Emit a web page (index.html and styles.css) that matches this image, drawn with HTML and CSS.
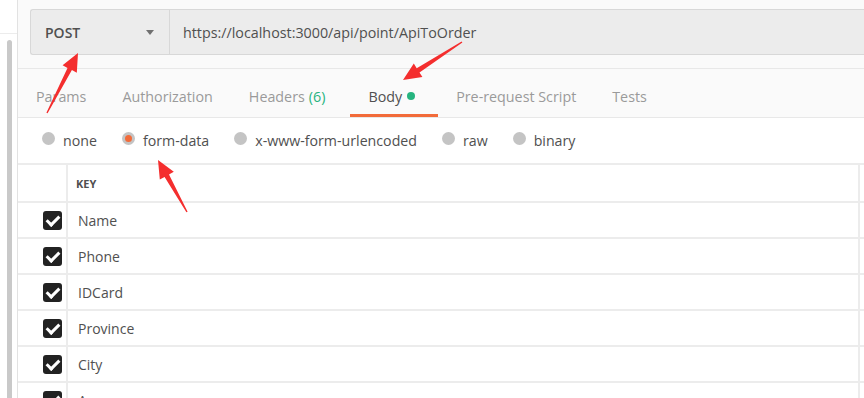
FILE: index.html
```html
<!DOCTYPE html>
<html lang="en">
<head>
    <meta charset="UTF-8">
    <meta name="viewport" content="width=device-width, initial-scale=1.0">
    <title>Request Body</title>
    <link rel="stylesheet" href="styles.css">
</head>
<body>
    <div class="page">
        <div class="sidebar">
            <div class="sidebar-top"></div>
            <div class="scroll-track"><div class="scroll-thumb"></div></div>
        </div>

        <div class="main">
            <div class="request-bar">
                <div class="method">POST <span class="caret"></span></div>
                <div class="url">https://localhost:3000/api/point/ApiToOrder</div>
            </div>

            <div class="tabs">
                <div class="tab">Params</div>
                <div class="tab">Authorization</div>
                <div class="tab">Headers <span class="count">(6)</span></div>
                <div class="tab active">Body <span class="dot"></span></div>
                <div class="tab">Pre-request Script</div>
                <div class="tab">Tests</div>
            </div>

            <div class="body-types">
                <label class="radio"><span class="circle"></span>none</label>
                <label class="radio checked"><span class="circle"></span>form-data</label>
                <label class="radio"><span class="circle"></span>x-www-form-urlencoded</label>
                <label class="radio"><span class="circle"></span>raw</label>
                <label class="radio"><span class="circle"></span>binary</label>
            </div>

            <div class="kv-table">
                <div class="kv-row head">
                    <div class="check-cell"></div>
                    <div class="key-cell">KEY</div>
                    <div class="end-cell"></div>
                </div>
                <div class="kv-row">
                    <div class="check-cell"><span class="checkbox"></span></div>
                    <div class="key-cell">Name</div>
                    <div class="end-cell"></div>
                </div>
                <div class="kv-row">
                    <div class="check-cell"><span class="checkbox"></span></div>
                    <div class="key-cell">Phone</div>
                    <div class="end-cell"></div>
                </div>
                <div class="kv-row">
                    <div class="check-cell"><span class="checkbox"></span></div>
                    <div class="key-cell">IDCard</div>
                    <div class="end-cell"></div>
                </div>
                <div class="kv-row">
                    <div class="check-cell"><span class="checkbox"></span></div>
                    <div class="key-cell">Province</div>
                    <div class="end-cell"></div>
                </div>
                <div class="kv-row">
                    <div class="check-cell"><span class="checkbox"></span></div>
                    <div class="key-cell">City</div>
                    <div class="end-cell"></div>
                </div>
                <div class="kv-row">
                    <div class="check-cell"><span class="checkbox"></span></div>
                    <div class="key-cell">Area</div>
                    <div class="end-cell"></div>
                </div>
            </div>
        </div>

        <!-- annotation arrows drawn over the screenshot -->
        <svg class="arrows" width="864" height="398" viewBox="0 0 864 398">
            <polygon points="78,53 76.8,72.7 71.9,70.1 47.6,113.3 46.4,112.7 67.5,67.9 62.6,65.3"/>
            <polygon points="403,80 422.4,77 419.5,72.4 462.4,42.6 461.6,41.4 416.7,68.2 413.8,63.6"/>
            <polygon points="158,160 173.8,171.8 169,174.5 187.6,211.7 186.4,212.3 164.6,176.9 159.8,179.6"/>
        </svg>
    </div>
</body>
</html>
```

FILE: styles.css
```css
body {
    margin: 0;
    font-family: 'Open Sans', 'Noto Sans', sans-serif;
    font-size: 14px;
    color: #505050;
    background-color: #fff;
}
.page {
    position: relative;
    display: flex;
    width: 864px;
    height: 398px;
    overflow: hidden;
}
.sidebar {
    width: 17px;
    flex-shrink: 0;
    border-right: 1px solid #e2e2e2;
    background-color: #fff;
}
.sidebar-top {
    height: 33px;
    border-bottom: 1px solid #ececec;
}
.scroll-track {
    padding: 6px 0 0 7px;
}
.scroll-thumb {
    width: 5px;
    height: 400px;
    background-color: #c9c9c9;
    border-radius: 3px 3px 0 0;
}
.main {
    flex: 1;
    background-color: #fafafa;
}
.request-bar {
    display: flex;
    height: 44px;
    margin: 9px 0 13px 12px;
    background-color: #ececec;
    border: 1px solid #d8d8d8;
    border-right: none;
    border-radius: 3px 0 0 3px;
}
.method {
    display: flex;
    align-items: center;
    width: 124px;
    padding-left: 14px;
    border-right: 1px solid #d8d8d8;
    font-weight: 600;
    color: #505050;
}
.caret {
    margin-left: auto;
    margin-right: 15px;
    border-left: 4px solid transparent;
    border-right: 4px solid transparent;
    border-top: 5px solid #707070;
}
.url {
    display: flex;
    align-items: center;
    padding-left: 13px;
    font-size: 14.3px;
    color: #505050;
}
.tabs {
    display: flex;
    height: 48px;
    border-top: 1px solid #e8e8e8;
    border-bottom: 1px solid #e8e8e8;
}
.tab {
    display: flex;
    align-items: center;
    padding: 9px 18px 0;
    font-size: 14.3px;
    color: #9a9a9a;
    border-bottom: 3px solid transparent;
}
.tab.active {
    color: #505050;
    padding-right: 23px;
    border-bottom-color: #f26b3a;
}
.count {
    color: #26b47f;
    margin-left: 4px;
    margin-right: 7px;
}
.dot {
    width: 8px;
    height: 8px;
    margin-left: 5px;
    border-radius: 50%;
    background-color: #26b47f;
}
.body-types {
    display: flex;
    align-items: center;
    gap: 25px;
    height: 45px;
    padding-left: 24px;
    font-size: 14.2px;
    background-color: #fff;
}
.radio {
    display: flex;
    align-items: center;
}
.circle {
    width: 13px;
    height: 13px;
    margin-right: 8px;
    margin-top: -5px;
    border-radius: 50%;
    background-color: #c4c4c4;
    display: flex;
    align-items: center;
    justify-content: center;
}
.radio.checked .circle::after {
    content: "";
    width: 7px;
    height: 7px;
    border-radius: 50%;
    background-color: #f26b3a;
}
.kv-table {
    background-color: #fff;
    border-top: 2px solid #ececec;
}
.kv-row {
    display: flex;
    height: 34px;
    border-bottom: 2px solid #ececec;
}
.kv-row.head {
    height: 36px;
}
.check-cell {
    width: 50px;
    display: flex;
    align-items: center;
    justify-content: flex-end;
    padding-right: 4px;
    box-sizing: border-box;
    border-right: 2px solid #ececec;
}
.key-cell {
    width: 792px;
    box-sizing: border-box;
    display: flex;
    align-items: center;
    padding-left: 10px;
    border-right: 2px solid #ececec;
}
.head .key-cell {
    font-size: 11px;
    font-weight: 700;
    color: #505050;
    padding-left: 8px;
}
.end-cell {
    flex: 1;
}
.checkbox {
    position: relative;
    width: 19px;
    height: 19px;
    border-radius: 3px;
    background-color: #222;
}
.checkbox::after {
    content: "";
    position: absolute;
    left: 6px;
    top: 2px;
    width: 5px;
    height: 10px;
    border-right: 3px solid #fff;
    border-bottom: 3px solid #fff;
    transform: rotate(45deg);
}
.arrows {
    position: absolute;
    left: 0;
    top: 0;
    fill: #f42e2e;
}
```
